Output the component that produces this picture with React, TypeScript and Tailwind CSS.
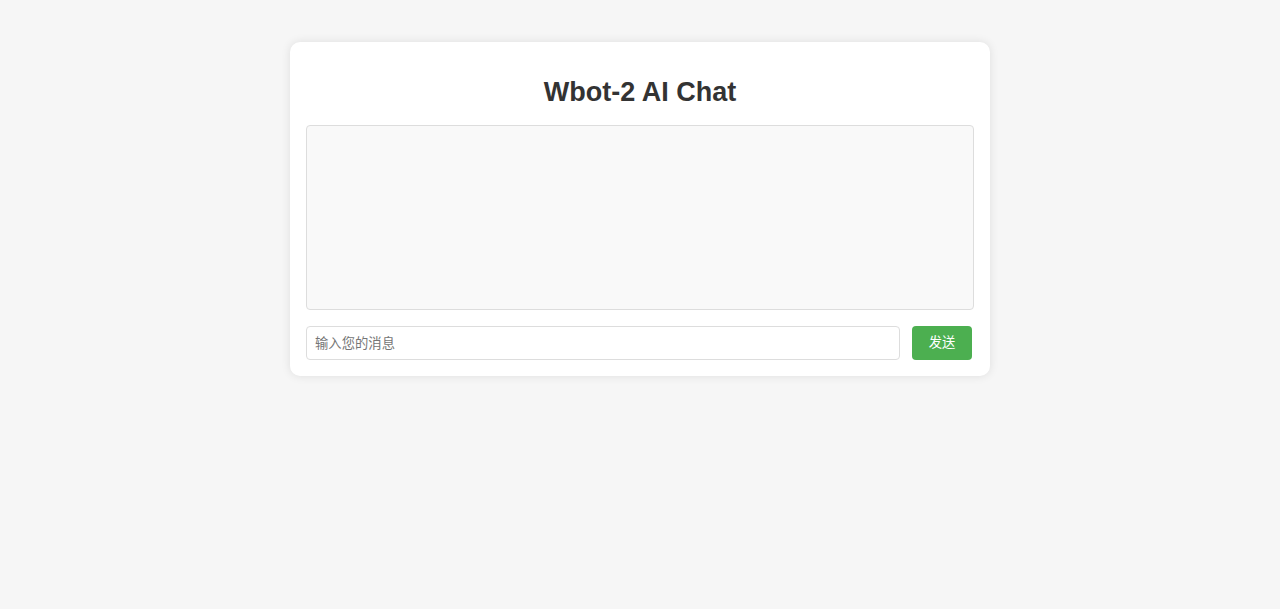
import { useState } from 'react';

const App = () => {
  const [message, setMessage] = useState('');

  return (
    <div className="min-h-screen bg-[#f6f6f6] pt-[42px] font-['Liberation_Sans','Noto_Sans_CJK_SC',sans-serif]">
      <div className="mx-auto w-[700px] rounded-[10px] bg-white p-4 shadow-[0_0_10px_rgba(0,0,0,0.1)]">
        <h1 className="mt-[19px] mb-[18px] text-center text-[27px] leading-[30px] font-bold text-[#333]">
          Wbot-2 AI Chat
        </h1>
        <div className="h-[185px] overflow-y-auto rounded-[4px] border border-[#ddd] bg-[#f9f9f9] p-2.5"></div>
        <div className="mt-4 flex gap-3 pr-[2px]">
          <input
            type="text"
            value={message}
            onChange={(e) => setMessage(e.target.value)}
            placeholder="输入您的消息"
            className="h-[34px] flex-1 rounded-[4px] border border-[#ddd] px-2 text-[13.33px] text-[#333] outline-none placeholder:text-[#757575]"
          />
          <button className="h-[34px] w-[60px] rounded-[4px] bg-[#4caf50] text-[13.33px] text-white">
            发送
          </button>
        </div>
      </div>
    </div>
  );
};

export default App;
